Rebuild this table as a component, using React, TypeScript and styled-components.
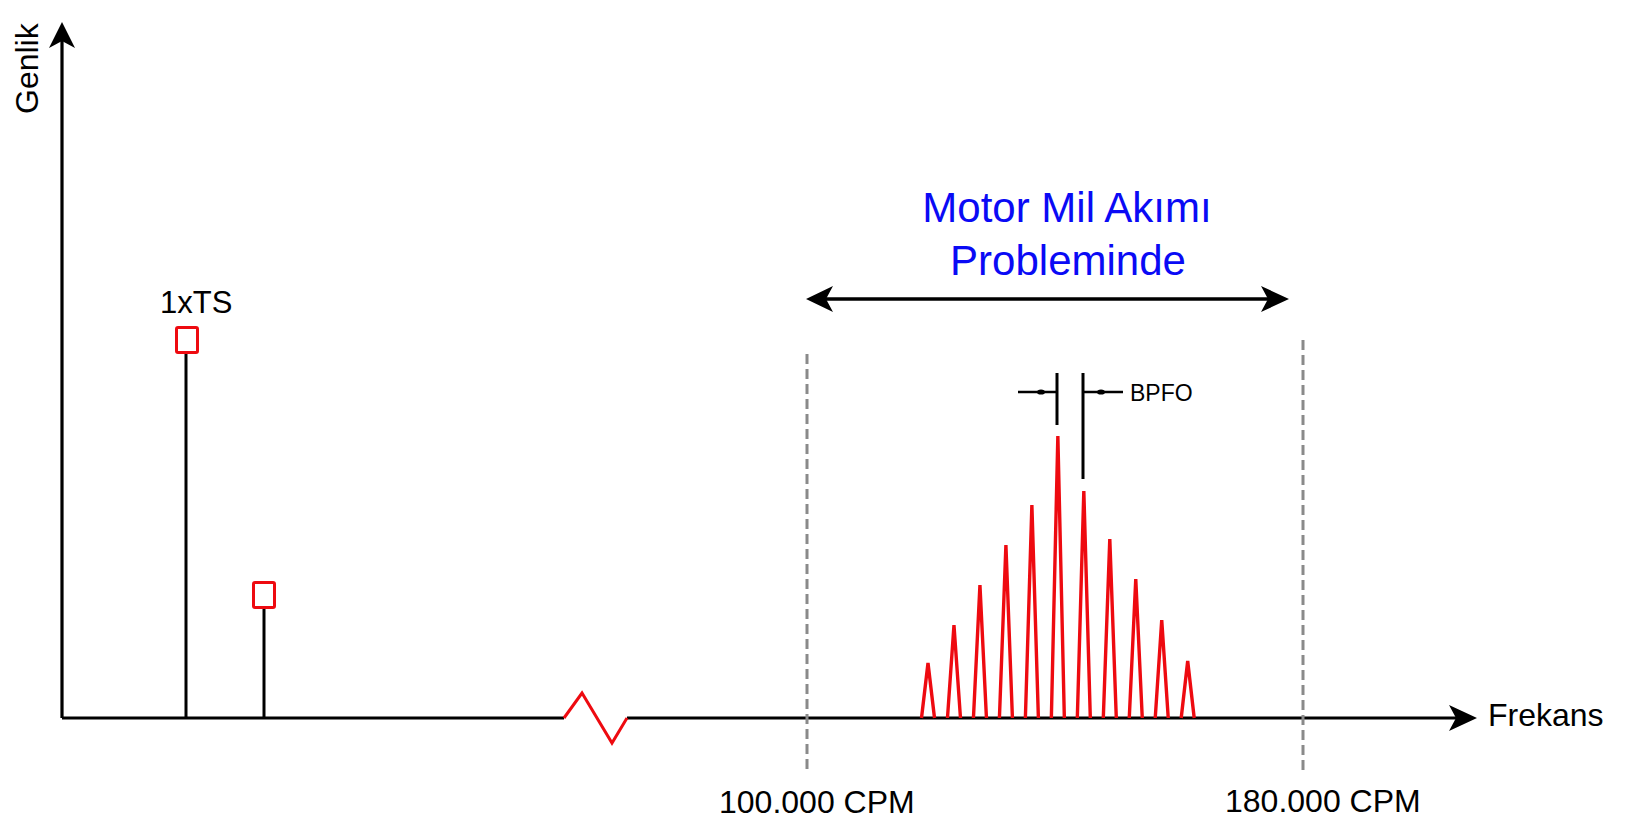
import { FC } from "react";
import styled, { createGlobalStyle } from "styled-components";

const GlobalStyle = createGlobalStyle`
  html, body {
    margin: 0;
    padding: 0;
    background: #ffffff;
    overflow: hidden;
  }
`;

const AXIS_Y = 718;
const RED = "#ee0a10";

// sidebands around the bearing frequency, heights as read off the plot
const PEAK_TOPS = [663, 625, 585, 545, 505, 436, 491, 539, 579, 620, 661];
const PEAK_START = 928;
const PEAK_STEP = 25.97;
const PEAK_HALF = 6.5;

const Page = styled.div`
  width: 1627px;
  height: 833px;
  display: flex;
`;

const Figure = styled.svg`
  display: block;
  width: 1627px;
  height: 833px;
  font-family: "Liberation Sans", Arial, sans-serif;
`;

const Label = styled.text<{ $size: number; $color?: string }>`
  font-size: ${(p) => p.$size}px;
  fill: ${(p) => p.$color ?? "#000000"};
`;

const Axis = styled.path`
  fill: none;
  stroke: #000000;
  stroke-width: 3.2;
`;

const Arrow = styled.polygon`
  fill: #000000;
`;

const Stem = styled.line<{ $w?: number }>`
  stroke: #000000;
  stroke-width: ${(p) => p.$w ?? 3};
`;

const Marker = styled.rect`
  fill: #ffffff;
  stroke: ${RED};
  stroke-width: 3;
`;

const Peak = styled.polyline`
  fill: none;
  stroke: ${RED};
  stroke-width: 3.4;
  stroke-linejoin: miter;
`;

const BreakMark = styled.polyline`
  fill: none;
  stroke: ${RED};
  stroke-width: 3;
`;

const Limit = styled.line`
  stroke: #8a8a8a;
  stroke-width: 3;
  stroke-dasharray: 10 5;
`;

const Dot = styled.ellipse`
  fill: #000000;
`;

const arrowRight = (x: number, y: number) =>
  `${x},${y} ${x - 28},${y - 13} ${x - 21},${y} ${x - 28},${y + 13}`;
const arrowLeft = (x: number, y: number) =>
  `${x},${y} ${x + 27},${y - 13} ${x + 20},${y} ${x + 27},${y + 13}`;
const arrowUp = (x: number, y: number) =>
  `${x},${y} ${x + 13},${y + 26} ${x},${y + 19} ${x - 13},${y + 26}`;

const Spectrum: FC = () => (
  <Figure viewBox="0 0 1627 833">
    {/* axes */}
    <Axis d={`M62 ${AXIS_Y} V40 M62 ${AXIS_Y} H564 M627 ${AXIS_Y} H1458`} />
    <Arrow points={arrowUp(62, 22)} />
    <Arrow points={arrowRight(1477, AXIS_Y)} />
    <BreakMark points={`564,${AXIS_Y} 582,693 612,743 627,${AXIS_Y}`} />

    <Label $size={32} transform="translate(38,114) rotate(-90)">
      Genlik
    </Label>
    <Label $size={32} x={1488} y={726}>
      Frekans
    </Label>

    {/* running speed */}
    <Label $size={31} x={160} y={313}>
      1xTS
    </Label>
    <Stem x1={186} y1={354} x2={186} y2={AXIS_Y} />
    <Marker x={176.5} y={327.5} width={21} height={25} rx={1.5} />
    <Stem x1={264} y1={609} x2={264} y2={AXIS_Y} />
    <Marker x={253.5} y={582.5} width={21} height={25} rx={1.5} />

    {/* band limits */}
    <Limit x1={807} y1={354} x2={807} y2={770} />
    <Limit x1={1303} y1={340} x2={1303} y2={770} />
    <Label $size={32} x={719} y={813}>
      100.000 CPM
    </Label>
    <Label $size={32} x={1225} y={812}>
      180.000 CPM
    </Label>

    {/* band title */}
    <Label $size={42} $color="#0a0af5" x={1067} y={222} textAnchor="middle">
      Motor Mil Akımı
    </Label>
    <Label $size={42} $color="#0a0af5" x={1068} y={275} textAnchor="middle">
      Probleminde
    </Label>
    <Stem x1={822} y1={299} x2={1273} y2={299} $w={3.5} />
    <Arrow points={arrowLeft(806, 299)} />
    <Arrow points={arrowRight(1289, 299)} />

    {/* sidebands */}
    {PEAK_TOPS.map((top, i) => {
      const cx = PEAK_START + i * PEAK_STEP;
      return (
        <Peak
          key={i}
          points={`${cx - PEAK_HALF},${AXIS_Y} ${cx},${top} ${cx + PEAK_HALF},${AXIS_Y}`}
        />
      );
    })}

    {/* BPFO spacing */}
    <Stem x1={1057} y1={373} x2={1057} y2={425} />
    <Stem x1={1083} y1={373} x2={1083} y2={479} />
    <Stem x1={1018} y1={392} x2={1056} y2={392} $w={2.5} />
    <Stem x1={1084} y1={392} x2={1123} y2={392} $w={2.5} />
    <Dot cx={1041} cy={392} rx={4} ry={2.6} />
    <Dot cx={1101} cy={392} rx={4} ry={2.6} />
    <Label $size={23} x={1130} y={401}>
      BPFO
    </Label>
  </Figure>
);

const App: FC = () => (
  <>
    <GlobalStyle />
    <Page>
      <Spectrum />
    </Page>
  </>
);

export default App;
